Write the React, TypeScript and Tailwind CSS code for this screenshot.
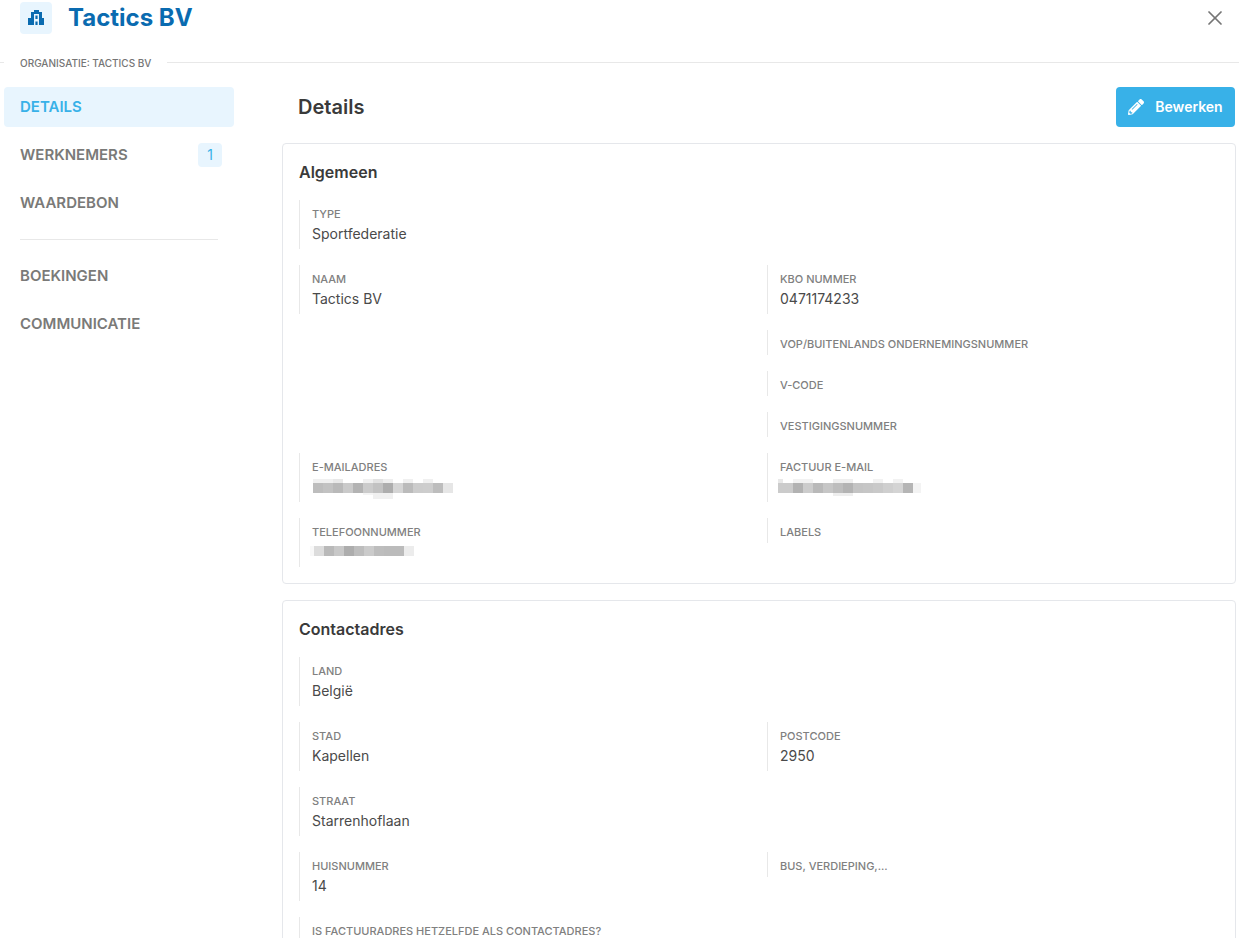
import React from "react";
import { X } from "lucide-react";
import { FaPencilAlt } from "react-icons/fa";

type Cell = [number, number, number, number, string];

// pixelated (privacy) blocks, x/y relative to the value slot
const blurEmail: Cell[] = [
  [1, 4, 20, 4, "#f0f0f0"], [21, 4, 10, 4, "#e8e8e8"], [51, 4, 10, 4, "#f0f0f0"], [61, 4, 10, 4, "#e2e2e2"], [71, 4, 10, 4, "#eeeeee"], [91, 4, 10, 4, "#f0f0f0"], [111, 4, 10, 4, "#f0f0f0"],
  ...["#bdbdbd", "#c2c2c2", "#b9b9b9", "#cacaca", "#b3b3b3", "#cbcbcb", "#c2c2c2", "#adadad", "#d5d5d5", "#bbbbbb", "#cccccc", "#cdcdcd", "#bdbdbd", "#e6e6e6"].map((c, i): Cell => [1 + i * 10, 8, 10, 10, c]),
  [51, 18, 10, 2, "#f4f4f4"], [61, 18, 20, 6, "#f0f0f0"],
];

const blurInvoice: Cell[] = [
  [-2, 4, 5, 4, "#e8e8e8"], [13, 4, 20, 4, "#f2f2f2"], [53, 4, 20, 4, "#eeeeee"], [93, 4, 10, 4, "#f2f2f2"], [113, 4, 10, 4, "#f2f2f2"],
  [-2, 8, 15, 10, "#cbcbcb"],
  ...["#b2b2b2", "#cccccc", "#b9b9b9", "#c6c6c6", "#bdbdbd", "#b3b3b3", "#c4c4c4", "#c6c6c6", "#c9c9c9", "#cfcfcf", "#d4d4d4", "#b5b5b5"].map((c, i): Cell => [13 + i * 10, 8, 10, 10, c]),
  [133, 8, 8, 10, "#f3f3f3"],
  [53, 18, 20, 3, "#eeeeee"],
];

const blurPhone: Cell[] = [
  [-2, 6, 4, 10, "#f8f8f8"],
  ...["#dcdcdc", "#b9b9b9", "#c8c8c8", "#adadad", "#bdbdbd", "#cbcbcb", "#bdbdbd", "#bbbbbb", "#bbbbbb", "#ececec"].map((c, i): Cell => [2 + i * 10, 6, 10, 10, c]),
];

function Blur({ cells }: { cells: Cell[] }) {
  return (
    <svg width="150" height="24" className="overflow-visible">
      {cells.map(([x, y, w, h, c], i) => (
        <rect key={i} x={x} y={y} width={w} height={h} fill={c} />
      ))}
    </svg>
  );
}

function Field({ label, value, children }: { label: string; value?: string; children?: React.ReactNode }) {
  return (
    <div className="border-l border-[#e8e8e8] pl-3 pt-[6px] pb-[3px]">
      <div className="text-[11px] leading-4 font-medium uppercase text-[#808080]">{label}</div>
      {value && <div className="text-sm leading-6 text-[#4a4a4a]">{value}</div>}
      {children && <div className="h-6">{children}</div>}
    </div>
  );
}

function Card({ title, children }: { title: string; children: React.ReactNode }) {
  return (
    <section className="border border-[#e5e7eb] rounded p-4">
      <h3 className="text-base leading-6 font-semibold text-[#3a3a3a] mb-4">{title}</h3>
      <div className="grid grid-cols-2 gap-4 items-start">{children}</div>
    </section>
  );
}

function NavItem({ label, active, badge }: { label: string; active?: boolean; badge?: string }) {
  return (
    <div className={`h-10 rounded flex items-center justify-between pl-4 pr-3 text-[15px] font-semibold ${active ? "bg-[#e8f5fe] text-[#38b1e8]" : "text-[#7a7a78]"}`}>
      <span>{label}</span>
      {badge && (
        <span className="w-6 h-6 rounded bg-[#e8f5fe] text-[#38b1e8] text-sm font-normal flex items-center justify-center">{badge}</span>
      )}
    </div>
  );
}

export default function App() {
  return (
    <div className="h-[938px] w-[1239px] overflow-hidden bg-white font-['Inter',sans-serif]">
      {/* header */}
      <div className="h-[36px] pl-5 pr-3 pt-[2px] flex items-start justify-between">
        <div className="flex items-center gap-4">
          <div className="w-8 h-8 rounded bg-[#e8f5fe] flex items-center justify-center">
            <svg viewBox="0 0 16 16" className="w-4 h-4 text-[#0a6bb0]" fill="currentColor">
              <path d="M6 0h5v2h3v6h2v7H0V8h3V2h3V0z" />
              <path fill="#e8f5fe" fillRule="evenodd" d="M6 4h5v11H9.6v-3.5H7.4V15H6V4zm1.4 1.6V9h2.2V5.6H7.4z" />
            </svg>
          </div>
          <h1 className="text-2xl leading-8 font-bold text-[#0a6bb0]">Tactics BV</h1>
        </div>
        <X className="w-6 h-6 mt-1 text-[#757575]" strokeWidth={1.75} />
      </div>

      {/* legend line */}
      <div className="relative mt-[26px] ml-0 border-t border-[#e8e8e8]">
        <span className="absolute left-1 top-[-6px] bg-white px-4 text-[10px] leading-3 font-medium text-[#757575]">ORGANISATIE: TACTICS BV</span>
      </div>

      <div className="flex pt-6 pr-[3px]">
        {/* sidebar */}
        <nav className="w-[230px] ml-1 shrink-0 flex flex-col gap-2">
          <NavItem label="DETAILS" active />
          <NavItem label="WERKNEMERS" badge="1" />
          <NavItem label="WAARDEBON" />
          <div className="mx-4 my-2 border-t border-[#e8e8e8]" />
          <NavItem label="BOEKINGEN" />
          <NavItem label="COMMUNICATIE" />
        </nav>

        {/* main */}
        <main className="ml-12 flex-1 min-w-0">
          <div className="flex items-center justify-between h-10 pl-4 pr-px mb-4">
            <h2 className="text-xl font-semibold text-[#3a3a3a]">Details</h2>
            <button className="h-10 w-[119px] rounded bg-[#38b1e8] text-white text-sm font-semibold flex items-center justify-center gap-[11px]">
              <FaPencilAlt className="w-4 h-4" />
              Bewerken
            </button>
          </div>

          <div className="flex flex-col gap-4">
            <Card title="Algemeen">
              <div className="col-span-2">
                <Field label="Type" value="Sportfederatie" />
              </div>
              <Field label="Naam" value="Tactics BV" />
              <div className="flex flex-col gap-4">
                <Field label="KBO nummer" value="0471174233" />
                <Field label="VOP/Buitenlands ondernemingsnummer" />
                <Field label="V-code" />
                <Field label="Vestigingsnummer" />
              </div>
              <Field label="E-mailadres"><Blur cells={blurEmail} /></Field>
              <Field label="Factuur e-mail"><Blur cells={blurInvoice} /></Field>
              <Field label="Telefoonnummer"><Blur cells={blurPhone} /></Field>
              <Field label="Labels" />
            </Card>

            <Card title="Contactadres">
              <div className="col-span-2">
                <Field label="Land" value="België" />
              </div>
              <Field label="Stad" value="Kapellen" />
              <Field label="Postcode" value="2950" />
              <div className="col-span-2">
                <Field label="Straat" value="Starrenhoflaan" />
              </div>
              <Field label="Huisnummer" value="14" />
              <Field label="Bus, verdieping,..." />
              <div className="col-span-2">
                <Field label="Is factuuradres hetzelfde als contactadres?" />
              </div>
            </Card>
          </div>
        </main>
      </div>
    </div>
  );
}
